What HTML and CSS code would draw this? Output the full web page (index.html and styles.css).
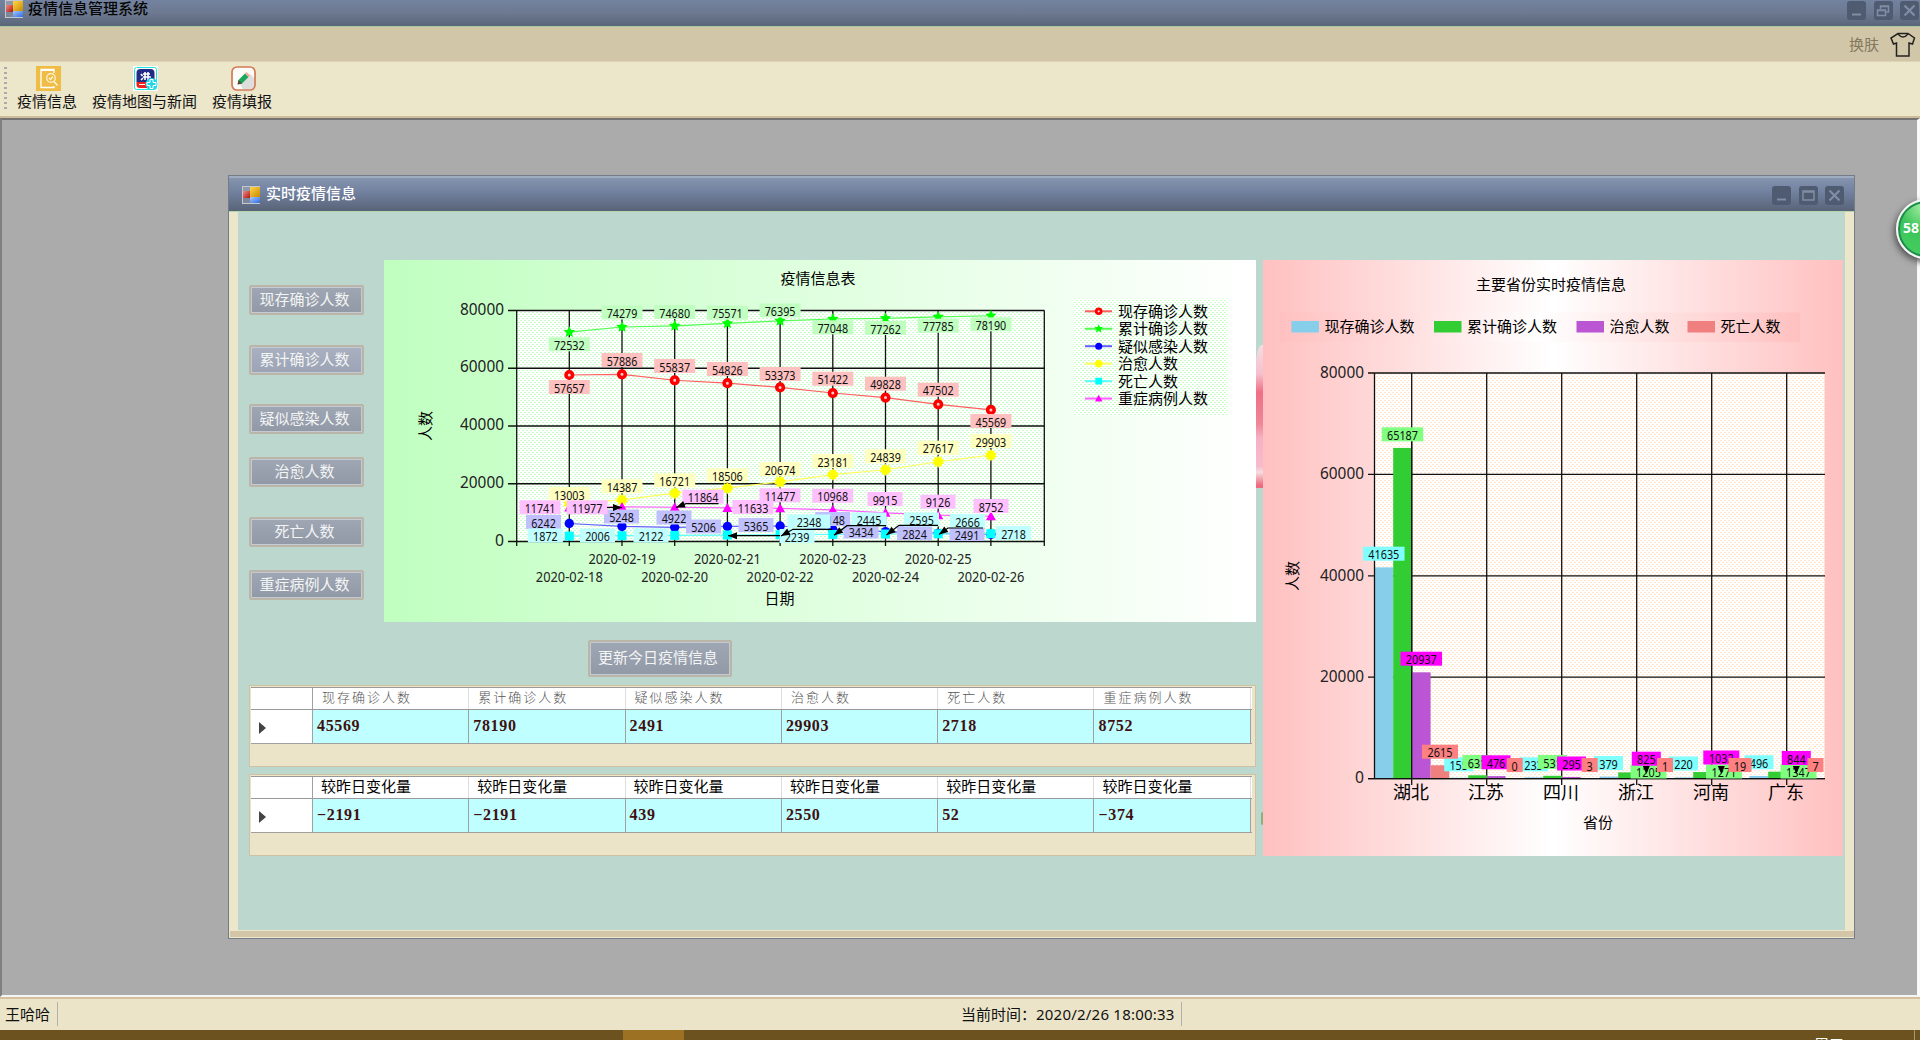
FILE: index.html
```html
<!DOCTYPE html>
<html lang="zh-CN">
<head>
<meta charset="utf-8">
<title>疫情信息管理系统</title>
<link rel="stylesheet" href="styles.css">
</head>
<body>
<svg class="defs" width="0" height="0">
  <defs>
    <linearGradient id="gy" x1="0" y1="0" x2="1" y2="1"><stop offset="0" stop-color="#ffd54a"/><stop offset="1" stop-color="#c98a00"/></linearGradient>
    <linearGradient id="gr" x1="0" y1="0" x2="1" y2="1"><stop offset="0" stop-color="#f08a80"/><stop offset="1" stop-color="#b01818"/></linearGradient>
    <linearGradient id="gb" x1="0" y1="0" x2="1" y2="1"><stop offset="0" stop-color="#a8c8ff"/><stop offset="1" stop-color="#2f6be0"/></linearGradient>
    <symbol id="app" viewBox="0 0 18 18">
      <rect x=".5" y=".5" width="17" height="17" fill="#8f98a8" stroke="#c3c8d0"/>
      <rect x="1" y="5" width="7" height="7" fill="url(#gr)"/>
      <rect x="1" y="12" width="7" height="5" fill="#7e8797"/>
      <rect x="8" y="1" width="10" height="10" fill="url(#gy)"/>
      <rect x="8" y="11" width="10" height="6" fill="url(#gb)"/>
    </symbol>
    <symbol id="min" viewBox="0 0 19 19"><path d="M5 13.5h9" stroke="#7f8ea5" stroke-width="2"/></symbol>
    <symbol id="max" viewBox="0 0 19 19"><path d="M4 5h11v9H4zM4 6h11" fill="none" stroke="#7f8ea5" stroke-width="1.5"/></symbol>
    <symbol id="restore" viewBox="0 0 19 19"><path d="M6.5 8V5h8v6h-3M3.500 9h8v5.500h-8zM6 5.500h9M3 9.500h9" fill="none" stroke="#7f8ea5" stroke-width="1.500"/></symbol>
    <symbol id="close" viewBox="0 0 19 19"><path d="M4.500 4.500l10 10M14.500 4.500l-10 10" stroke="#7f8ea5" stroke-width="2.200"/></symbol>
  </defs>
</svg>
<div class="app">
  <header class="titlebar">
    <svg class="app-icon"><use href="#app"/></svg>
    <span class="title">疫情信息管理系统</span>
    <div class="controls">
      <svg><use href="#min"/></svg><svg><use href="#restore"/></svg><svg><use href="#close"/></svg>
    </div>
  </header>
  <div class="skinbar">
    <span>换肤</span>
    <svg width="26" height="26" viewBox="0 0 26 26"><path d="M8 1.500h10l6.500 4.500-2 6-3.500-1V24H6.500V11L3.500 12 1 6z" fill="none" stroke="#222" stroke-width="1.500"/><path d="M8 2q5 6 10 0" fill="none" stroke="#222" stroke-width="1.300"/></svg>
  </div>
  <nav class="toolbar">
    <div class="grip"></div>
    <div class="tool">
      <svg width="25" height="25" viewBox="0 0 25 25"><rect width="25" height="25" fill="#efbd45"/><path d="M18 7V3.500H5v18h13V20" fill="none" stroke="#fff" stroke-width="1.300"/><path d="M5 4h13" stroke="#fff" stroke-width="2"/><circle cx="15" cy="12" r="4.300" fill="none" stroke="#fff6dc" stroke-width="1.200"/><path d="M18 15.500l3.500 4M13 12l1.500 1.500 2.500-3" stroke="#fff6dc" fill="none" stroke-width="1.400"/></svg>
      <span>疫情信息</span>
    </div>
    <div class="tool">
      <svg width="25" height="25" viewBox="0 0 25 25"><rect width="25" height="25" fill="#fff"/><rect x="1.500" y="1.500" width="22" height="22" rx="2" fill="#fff" stroke="#24e4e0"/><path d="M3.500 16V7q0-4 4-4h10q4 0 4 4v9z" fill="#222c86"/><path d="M3.500 16H15v6H7q-3.500 0-3.500-3z" fill="#f02020"/><path d="M8 8l1.500 2M8 14l2-2M12 6v8M10 8h7M15 6v8M10 11h8" stroke="#fff" stroke-width="1.600"/><path d="M6 18.500h6" stroke="#fff"/><circle cx="18.500" cy="18" r="6" fill="#20d4e4"/><path d="M17 13.500h3v3h3v3h-3v3h-3v-3h-3v-3h3z" fill="none" stroke="#fff" stroke-width="1"/></svg>
      <span>疫情地图与新闻</span>
    </div>
    <div class="tool">
      <svg width="25" height="25" viewBox="0 0 25 25"><rect x="1" y="1" width="23" height="23" rx="5" fill="#fbfbf8" stroke="#d27a55" stroke-width="1.700"/><path d="M9 18l10-10 4 4v9l-2 2h-9z" fill="#ccc" opacity=".6"/><path d="M7.500 14L14 7.500l3.500 3.500-6.500 6.500-4 1z" fill="#19a85a"/><path d="M14 7.500l1.500-1.500 3.500 3.500-1.500 1.500z" fill="#f3a79a"/><path d="M7.500 14l-1 4.500 4.500-1z" fill="#5b4630"/></svg>
      <span>疫情填报</span>
    </div>
  </nav>
  <main class="desktop">
    <section class="window">
      <header class="window-title">
        <svg class="app-icon"><use href="#app"/></svg>
        <span class="title">实时疫情信息</span>
        <div class="controls">
          <svg><use href="#min"/></svg><svg><use href="#max"/></svg><svg><use href="#close"/></svg>
        </div>
      </header>
      <div class="client">
        <div class="left">
          <div class="overview">
            <div class="buttons">
              <button>现存确诊人数</button><button>累计确诊人数</button><button>疑似感染人数</button><button>治愈人数</button><button>死亡人数</button><button>重症病例人数</button>
            </div>
            <svg id="trend" class="trend" viewBox="384 260 872 362"></svg>
          </div>
          <button class="update">更新今日疫情信息</button>
          <div class="grid">
            <div class="row head thin"><i></i><b>现存确诊人数</b><b>累计确诊人数</b><b>疑似感染人数</b><b>治愈人数</b><b>死亡人数</b><b>重症病例人数</b></div>
            <div class="row data"><i></i><b>45569</b><b>78190</b><b>2491</b><b>29903</b><b>2718</b><b>8752</b></div>
          </div>
          <div class="grid">
            <div class="row head"><i></i><b>较昨日变化量</b><b>较昨日变化量</b><b>较昨日变化量</b><b>较昨日变化量</b><b>较昨日变化量</b><b>较昨日变化量</b></div>
            <div class="row data"><i></i><b>−2191</b><b>−2191</b><b>439</b><b>2550</b><b>52</b><b>−374</b></div>
          </div>
        </div>
        <svg id="province" class="province" viewBox="1263 260 580 596"></svg>
        <div class="petal"></div>
        <div class="leaf"></div>
      </div>
    </section>
    <div class="ball">58</div>
  </main>
  <footer class="status">
    <span class="user">王哈哈</span>
    <span class="time">当前时间：<em>2020/2/26 18:00:33</em></span>
  </footer>
  <div class="taskbar"><div class="active"></div><span>18:00 周三</span><div class="peek"></div></div>
</div>
<script src="charts.js"></script>
</body>
</html>
```
FILE: styles.css
```css
* { box-sizing: border-box; }
body { margin: 0; font-family: "Noto Sans", "Noto Sans CJK SC", sans-serif; font-size: 15px; color: #111; overflow: hidden; }
.defs { position: absolute; }
.app { width: 1920px; height: 1040px; display: flex; flex-direction: column; overflow: hidden; }
.titlebar { height: 27px; flex: none; display: flex; align-items: flex-start; padding: 0 1px 0 5px; background: linear-gradient(#73829f, #6c7990 50%, #5a6579); border-bottom: 1px solid #a9c9a0; }
.app-icon { width: 18px; height: 18px; flex: none; }
.title { font-family: "Noto Sans CJK SC", sans-serif; font-weight: 500; line-height: 18px; margin-left: 5px; white-space: nowrap; color: #050505; }
.titlebar .title { margin-top: -1px; }
.controls { margin-left: auto; display: flex; gap: 7.5px; }
.controls svg { width: 19px; height: 19px; background: #4f5b70; border-radius: 3px; }
.titlebar .controls { margin-top: 1px; }
.skinbar { height: 35px; flex: none; display: flex; justify-content: flex-end; align-items: center; gap: 11px; padding: 1px 4px 0 0; background: #d2c6a8; color: #85785f; font-family: "Noto Sans CJK SC", sans-serif; border-bottom: 1px solid #ddd3b6; }
.skinbar span { margin-top: -2px; }
.toolbar { height: 56px; flex: none; display: flex; align-items: flex-start; padding: 4px 0 0 4px; background: #ece6cb; border-bottom: 2px solid #cdbd9b; font-family: "Noto Sans CJK SC", sans-serif; }
.grip { width: 3px; height: 44px; margin: 1px 10px 0 0; background: repeating-linear-gradient(#aaa 0 2px, transparent 2px 5px); }
.tool { display: flex; flex-direction: column; align-items: center; margin-right: 15px; }
.tool svg { margin-left: 2px; }
.tool span { line-height: 20px; white-space: nowrap; }
.desktop { flex: none; height: 879px; position: relative; background: #ababab; border: solid; border-width: 2px 3px 2px 2px; border-color: #737373 #fafafa #f4f4f4 #808080; clip-path: inset(0); }
.window { position: absolute; left: 226px; top: 55px; width: 1627px; height: 764px; display: flex; flex-direction: column; background: #ece6cb; border: 1px solid #757c89; }
.window-title { height: 36px; flex: none; display: flex; align-items: flex-start; padding: 8px 10px 0 13px; background: linear-gradient(#8595ae, #7282a0 40%, #586377); border-top: 2px solid #a0acc0; border-bottom: 1px solid #b5d5ae; }
.window-title .title { color: #fff; margin: -2px 0 0 6px; }
.client { flex: none; position: relative; height: 718px; margin: 0 9px; padding: 48px 0 0 11px; display: flex; gap: 7px; align-items: flex-start; background: #bcd8ce; }
.window::after { content: ""; height: 6px; margin: 1px 0 0 1px; background: #d3c6a8; }
.left { width: 1007px; display: flex; flex-direction: column; }
.overview { display: flex; gap: 20px; height: 362px; }
.buttons { width: 115px; padding-top: 25px; display: flex; flex-direction: column; }
button { display: block; flex: none; height: 30px; padding: 0 0 3px; border: 2px solid #b9b5a9; border-radius: 2px; background: linear-gradient(#a0a7b4, #9198a6); color: #f3f5f5; font: 15px "Noto Sans CJK SC", sans-serif; line-height: 22px; white-space: nowrap; box-shadow: inset 0 0 0 1px #c5c9d2; }
.buttons button { margin-bottom: 30px; padding-right: 4px; }
.buttons button:nth-child(2) { margin-bottom: 29px; background: linear-gradient(#aab1c0, #9ba3b5); }
.buttons button:nth-child(3), .buttons button:nth-child(5) { margin-bottom: 23px; }
.buttons button:last-child { margin-bottom: 0; }
.trend { width: 872px; height: 362px; display: block; background: linear-gradient(90deg, #c0ffc0, #fff); }
.update { width: 144px; height: 37px; margin: 18px 0 8px 339px; padding-right: 4px; }
.province { width: 580px; height: 596px; display: block; flex: none; background: linear-gradient(90deg, #ffc0c0, #fff 50%, #ffc0c0); }
.grid { height: 82px; margin-bottom: 7px; background: #ebe4c9; border: 1px solid #cfc2a2; padding: 1px 0 0 1px; }
.row { display: grid; grid-template-columns: 62px repeat(6, 156.300px); width: 1000.500px; }
.row i { border-right: 1.500px solid #a0a0a0; }
.row b { white-space: nowrap; }
.head { height: 23px; background: #fff; border-top: 1px solid #999; border-bottom: 1px solid #999; }
.head b { font: 15px/18px "Noto Sans CJK SC", sans-serif; color: #000; padding-left: 8px; border-right: 1px solid #ddd; }
.head.thin b { font-size: 13px; letter-spacing: 2px; color: #555; font-weight: 300; padding-left: 9px; }
.data { height: 34px; border-bottom: 1px solid #a0a0a0; }
.data b { font: bold 16px/31px "Liberation Serif", serif; letter-spacing: .65px; color: #401010; background: #c0ffff; border-right: 1px solid #a0a0a0; padding-left: 4px; }
.data i { background: #fff; display: flex; align-items: center; padding: 2px 0 0 8px; }
.data i::before { content: ""; border: solid transparent; border-width: 6px 0 6px 7px; border-left-color: #444; }
.petal { position: absolute; left: 1018px; top: 133px; width: 7px; height: 143px; background: linear-gradient(#f4dce2, #f6c0ce 20%, #ef6f85 33%, #ee8798 55%, #f6b0c4 65%, #f7bccb 85%, #f3dde0 89%, #ee6c80 98%); border-radius: 6px 0 0 0 / 20px 0 0 0; }
.leaf { position: absolute; left: 1023px; top: 600px; width: 2px; height: 13px; background: #8fae7c; border-radius: 2px 0 0 2px; }
.ball { position: absolute; left: 1894px; top: 79px; width: 60px; height: 60px; border-radius: 50%; background: radial-gradient(circle at 45% 10%, #a4f0a4 0, #3cc45a 40%, #48d260 100%); border: 2px solid #f4f6f4; box-shadow: inset 0 0 0 2px #1f8a50, -2px 3px 6px #555; color: #fff; font: bold 14px/53px "Open Sans", sans-serif; padding-left: 5px; }
.status { height: 33px; flex: none; display: flex; align-items: center; padding: 0 0 2px 5px; background: #ebe4c9; border-top: 2px solid #d4bf9e; }
.status span { height: 24px; line-height: 24px; white-space: nowrap; border-right: 1px solid #b0b0b0; }
.user { width: 53px; }
.time { width: 221px; margin-left: 903px; }
.time em { font-style: normal; letter-spacing: .22px; }
.taskbar { height: 10px; flex: none; background: #6b521e; overflow: hidden; display: flex; }
.active { width: 61px; height: 10px; margin-left: 623px; background: #9c7124; }
.taskbar span { margin: 4px 70px 0 auto; color: #fff; font-size: 15px; line-height: 20px; white-space: nowrap; }
.peek { width: 6px; height: 10px; border-left: 1px solid #a59878; }
text { font-family: "Noto Sans", "Noto Sans CJK SC", sans-serif; fill: #111; }
.cjk { font-family: "Noto Sans CJK SC", sans-serif; font-size: 15px; fill: #000; }
.axis { font-size: 16.500px; fill: #222; }
.date { font-size: 14.500px; fill: #222; }
.label { font-size: 12.800px; }
.cjk.region { font-size: 18px; }
```
FILE: charts.js
```js
const mid = 'text-anchor="middle"';

function fitted(cls, x, y, value, width) {
  return `<text class="${cls}" x="${x - width / 2}" y="${y}" textLength="${width}" lengthAdjust="spacingAndGlyphs">${value}</text>`;
}

function line(x1, y1, x2, y2, width = 1.3) {
  return `<path d="M${x1} ${y1}L${x2} ${y2}" stroke="#111" stroke-width="${width}"/>`;
}

function hatch(id, colour) {
  return `<pattern id="${id}" width="4" height="4" patternUnits="userSpaceOnUse"><rect width="4" height="4" fill="#fff"/><path d="M0 .5h2M2 2.500h2" stroke="${colour}" stroke-width="1.200"/></pattern>`;
}

function marker(kind, x, y) {
  if (kind === 'ring') return `<circle cx="${x}" cy="${y}" r="3.300" fill="#fcc" stroke="#f00" stroke-width="3.600"/>`;
  if (kind === 'dot') return `<circle cx="${x}" cy="${y}" r="4.700" fill="#00f"/>`;
  if (kind === 'square') return `<rect x="${x - 4.5}" y="${y - 4.5}" width="9" height="9" fill="#0ff"/>`;
  if (kind === 'tri') return `<path d="M${x} ${y - 5}l5 9h-10z" fill="#f0f"/>`;
  const points = kind === 'star' ? 5 : 10;
  const outer = kind === 'star' ? 6 : 6.2;
  const inner = kind === 'star' ? 2.9 : 4.3;
  let d = '';
  for (let i = 0; i < points * 2; i++) {
    const r = i % 2 ? inner : outer, a = Math.PI * i / points;
    d += `${i ? 'L' : 'M'}${x + r * Math.sin(a)} ${y - r * Math.cos(a)}`;
  }
  return `<path d="${d}z" fill="${kind === 'star' ? '#0f0' : '#ff0'}"/>`;
}

/* daily trend */
const days = Array.from({ length: 9 }, (_, i) => 569.3 + 52.7 * i);
const trendY = v => 541.5 - v * 231 / 80000;
const series = [
  { name: '现存确诊人数', line: '#ff6060', fill: '#ffc0c0', kind: 'ring',
    v: [57657, 57886, 55837, 54826, 53373, 51422, 49828, 47502, 45569],
    y: [387, 360, 366, 369, 374, 378.7, 383.7, 389.7, 421] },
  { name: '累计确诊人数', line: '#50ff50', fill: '#c0ffc0', kind: 'star',
    v: [72532, 74279, 74680, 75571, 76395, 77048, 77262, 77785, 78190],
    y: [344.3, 312.5, 312, 312.7, 310.5, 327.3, 328, 325.7, 324.3] },
  { name: '疑似感染人数', line: '#6060ff', fill: '#c0c0ff', kind: 'dot',
    v: [6242, 5248, 4922, 5206, 5365, 4148, 3434, 2824, 2491],
    x: [543.5, 621.5, 674, 703.5, 756, 832.7, 861, 914.6, 967],
    y: [522, 516.5, 517.5, 526.5, 525, 519, 531.5, 533, 534] },
  { name: '治愈人数', line: '#ffff60', fill: '#ffffc0', kind: 'sun',
    v: [13003, 14387, 16721, 18506, 20674, 23181, 24839, 27617, 29903],
    y: [494, 486.3, 480.3, 475.3, 469, 461, 456.3, 447.7, 441] },
  { name: '死亡人数', line: '#60ffff', fill: '#c0ffff', kind: 'square',
    v: [1872, 2006, 2122, 2239, 2348, 2445, 2595, 2666, 2718],
    x: [545.4, 597.5, 651, 797, 809, 869, 921.5, 967.5, 1013.5],
    w: [35, 35, 35, 35, 43, 35, 35, 35, 35],
    y: [535.5, 535.5, 535.5, 536, 521.5, 519.5, 519.5, 521, 533] },
  { name: '重症病例人数', line: '#ff60ff', fill: '#ffc0ff', kind: 'tri',
    v: [11741, 11977, 11864, 11633, 11477, 10968, 9915, 9126, 8752],
    x: [540, 587, 703, 753, 780, 832.7, 885, 938, 991],
    y: [507.3, 507.3, 496.7, 507, 495.3, 495.7, 499, 501.7, 506] }
];

let out = `<defs>${hatch('green', '#c8ffc8')}</defs><rect x="516.500" y="310.500" width="528" height="231" fill="url(#green)"/>`;
for (let i = 0; i < 5; i++) {
  const y = 310.5 + 57.75 * i, value = 80000 - 20000 * i, w = value ? 44 : 9;
  out += line(508, y, 1044.5, y) + fitted('axis', 504 - w / 2, y + 4, value, w);
}
days.forEach((x, i) => {
  out += line(x, 310.5, x, 546) + fitted('date', x, i % 2 ? 563.5 : 582.3, `2020-02-${18 + i}`, 67);
});
out += line(516.7, 310.5, 516.7, 546) + line(1044.3, 310.5, 1044.3, 546);
series.forEach(s => {
  out += `<polyline fill="none" stroke="${s.line}" stroke-width="1.200" points="${s.v.map((v, i) => `${days[i]},${trendY(v)}`).join(' ')}"/>`;
  s.v.forEach((v, i) => { out += marker(s.kind, days[i], trendY(v)); });
});
series.forEach(s => s.v.forEach((v, i) => {
  const x = s.x ? s.x[i] : days[i], n = String(v).length, w = s.w ? s.w[i] : n === 5 ? 41 : 35;
  out += `<rect x="${x - w / 2}" y="${s.y[i] - 7}" width="${w}" height="14" fill="${s.fill}"/>` + fitted('label', x, s.y[i] + 5.7, v, n * 6.15);
}));
[
  [[607, 507.5], [622, 507.5]], [[718.6, 503.7], [686, 503.7], [676, 507.5]],
  [[780, 535.7], [728, 535.7]], [[832, 529.3], [793, 529.3], [781, 536]],
  [[886, 525.7], [847, 525.7], [834, 535.3]], [[938, 525.3], [899, 525.3], [886.5, 535]],
  [[983, 528], [948, 528], [939, 534.5]]
].forEach(p => {
  const [x, y] = p[p.length - 1], [px, py] = p[p.length - 2];
  const a = Math.atan2(y - py, x - px) * 180 / Math.PI;
  out += `<polyline points="${p.join(' ')}" fill="none" stroke="#000" stroke-width="1.200"/><path d="M0 0l-9-3.500v7z" transform="translate(${x} ${y}) rotate(${a})"/>`;
});
out += `<text class="cjk" ${mid} x="818" y="284">疫情信息表</text><text class="cjk" ${mid} x="779.500" y="604">日期</text>`;
out += `<text class="cjk" ${mid} transform="translate(431 426) rotate(-90)">人数</text>`;
out += '<rect x="1073.500" y="298.500" width="154" height="117" fill="url(#green)"/>';
series.forEach((s, i) => {
  const y = 311.3 + 17.45 * i;
  out += `<path d="M1085 ${y}h27" stroke="${s.line}" stroke-width="2"/><g transform="translate(1098.700 ${y}) scale(.75)">${marker(s.kind, 0, 0)}</g><text class="cjk" x="1118" y="${y + 5.4}">${s.name}</text>`;
});
document.getElementById('trend').innerHTML = out;

/* provinces */
const bars = [
  { name: '现存确诊人数', colour: '#87ceeb', fill: '#80ffff', lx: 1291.4, v: [41635, 155, 233, 379, 220, 496],
    at: [[1383.8, 553.7], [1458.7, 764.3], [1533.5, 764.3], [1608.5, 763], [1683.5, 763.5], [1759, 762.3]] },
  { name: '累计确诊人数', colour: '#32cd32', fill: '#80ff80', lx: 1434, v: [65187, 631, 531, 1205, 1271, 1347],
    at: [[1402.5, 434.3], [1477, 762], [1552.5, 762], [1648.5, 771.5], [1724, 771.5], [1798.5, 771.5]] },
  { name: '治愈人数', colour: '#ba55d3', fill: '#ff00ff', lx: 1576.5, v: [20937, 476, 295, 825, 1032, 844],
    at: [[1421.3, 658.7], [1496, 762.3], [1571.5, 763.5], [1646.3, 758.7], [1721.3, 757.5], [1796.3, 758]] },
  { name: '死亡人数', colour: '#f08080', fill: '#ff8080', lx: 1687.5, v: [2615, 0, 3, 1, 19, 7],
    at: [[1440, 751.7], [1514.7, 765], [1589.7, 765], [1665, 765], [1740, 765], [1815.5, 765]] }
];
const boxWidths = { 1: 16, 2: 23, 3: 29, 4: 36, 5: 41.5 };

out = `<defs>${hatch('peach', '#ffe6cc')}<linearGradient id="band"><stop stop-color="#ffc0c0"/><stop offset=".5" stop-color="#fff"/><stop offset="1" stop-color="#ffc0c0"/></linearGradient></defs>`;
out += '<rect x="1280" y="312.500" width="520" height="29.500" fill="url(#band)"/><rect x="1374.500" y="373" width="450" height="405.700" fill="url(#peach)"/>';
for (let i = 0; i < 5; i++) {
  const y = 373 + 101.4 * i, value = 80000 - 20000 * i, w = value ? 44 : 9;
  out += line(1368, y, 1825, y) + fitted('axis', 1364 - w / 2, y + 4.7, value, w);
}
['湖北', '江苏', '四川', '浙江', '河南', '广东'].forEach((name, i) => {
  const x = 1411.7 + 75 * i;
  out += line(x, 373, x, 785);
  bars.forEach((b, j) => {
    const h = b.v[i] * 405.7 / 80000;
    out += `<rect x="${1374.5 + 75 * i + 18.7 * j}" y="${778.5 - h}" width="18.700" height="${h}" fill="${b.colour}"/>`;
  });
  out += `<text class="cjk region" ${mid} x="${x - 0.7}" y="799">${name}</text>`;
});
out += line(1374.5, 373, 1374.5, 779) + line(1411.7, 434, 1411.7, 779) + line(1368, 778.7, 1825, 778.7);
bars.forEach(b => {
  b.v.forEach((v, i) => {
    const [x, y] = b.at[i], n = String(v).length, w = boxWidths[n];
    out += `<rect x="${x - w / 2}" y="${y - 7}" width="${w}" height="14" fill="${b.fill}"/>` + fitted('label', x, y + 5.7, v, n * 6.2);
  });
  out += `<rect x="${b.lx}" y="321" width="27.500" height="11.500" fill="${b.colour}"/><text class="cjk" x="${b.lx + 33}" y="332">${b.name}</text>`;
});
[1646.3, 1721.3, 1796.3].forEach(x => { out += `<path d="M${x - 3.5} 766h7l-3.500 8z"/>`; });
out += `<text class="cjk" ${mid} x="1551" y="290">主要省份实时疫情信息</text><text class="cjk" ${mid} x="1598" y="827.500">省份</text>`;
out += `<text class="cjk" ${mid} transform="translate(1298 576) rotate(-90)">人数</text>`;
document.getElementById('province').innerHTML = out;
```
